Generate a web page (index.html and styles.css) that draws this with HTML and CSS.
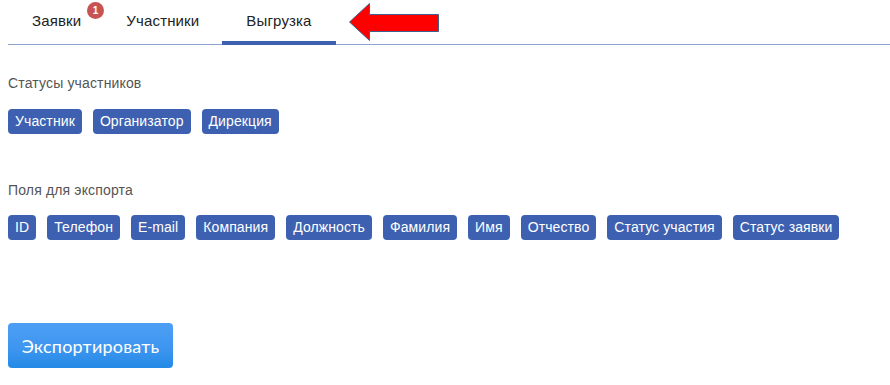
FILE: index.html
```html
<!DOCTYPE html>
<html lang="ru">
<head>
<meta charset="utf-8">
<title>Выгрузка</title>
<link rel="stylesheet" href="styles.css">
</head>
<body>
<div class="page">
  <nav class="tabs">
    <div class="tab">Заявки<span class="badge">1</span></div>
    <div class="tab">Участники</div>
    <div class="tab active">Выгрузка</div>
    <svg class="arrow" width="100" height="44" viewBox="0 0 100 44">
      <polygon points="5.5,22 25.5,3.5 25.5,14.5 94.5,14.5 94.5,31.5 25.5,31.5 25.5,40.5" fill="#ff0000" stroke="#41608f" stroke-width="1"/>
    </svg>
  </nav>

  <section class="group first">
    <div class="label">Статусы участников</div>
    <div class="chips">
      <span class="chip">Участник</span>
      <span class="chip">Организатор</span>
      <span class="chip">Дирекция</span>
    </div>
  </section>

  <section class="group second">
    <div class="label">Поля для экспорта</div>
    <div class="chips">
      <span class="chip">ID</span>
      <span class="chip">Телефон</span>
      <span class="chip">E-mail</span>
      <span class="chip">Компания</span>
      <span class="chip">Должность</span>
      <span class="chip">Фамилия</span>
      <span class="chip">Имя</span>
      <span class="chip">Отчество</span>
      <span class="chip">Статус участия</span>
      <span class="chip">Статус заявки</span>
    </div>
  </section>

  <button class="export">Экспортировать</button>
</div>
</body>
</html>
```

FILE: styles.css
```css
* { box-sizing: border-box; }
html, body { margin: 0; padding: 0; background: #fff; }
body {
  font-family: "Liberation Sans", Arial, sans-serif;
  color: #222;
}
.page {
  padding: 0 0 0 8px;
}
.tabs {
  position: relative;
  display: flex;
  border-bottom: 1px solid #8da2cf;
  height: 45px;
}
.tab {
  position: relative;
  height: 45px;
  line-height: 42px;
  padding: 0 23px 0 24px;
  font-size: 15px;
  letter-spacing: 0.15px;
  color: #222;
  border-bottom: 4px solid transparent;
  margin-bottom: -1px;
}
.tab:nth-child(2) { padding-left: 22px; }
.tab.active {
  border-bottom-color: #3d61b0;
  padding: 0 24px;
}
.badge {
  position: absolute;
  left: 79px;
  top: 2px;
  width: 17px;
  height: 17px;
  border-radius: 50%;
  background: #c75353;
  color: #fff;
  font-size: 10px;
  font-weight: bold;
  letter-spacing: 0;
  line-height: 17px;
  text-align: center;
}
.arrow {
  position: absolute;
  left: 336px;
  top: 0;
}
.group.first { padding-top: 28px; }
.group.second { padding-top: 46px; }
.label {
  font-size: 14px;
  line-height: 20px;
  letter-spacing: 0.15px;
  color: #555;
}
.chips {
  display: flex;
  gap: 11px;
  margin-top: 16px;
}
.group.second .chips { margin-top: 15px; }
.chip {
  display: inline-block;
  height: 25px;
  line-height: 25px;
  padding: 0 7px;
  background: #3d61b0;
  color: #fff;
  font-size: 14px;
  letter-spacing: 0.1px;
  border-radius: 4px;
  white-space: nowrap;
}
.export {
  display: block;
  margin-top: 83px;
  width: 165px;
  height: 45px;
  border: none;
  border-radius: 4px;
  background: linear-gradient(to bottom, #4c9ff4 0%, #3f96f0 55%, #238ae6 100%);
  color: #fff;
  font-family: "Lato", "Open Sans", sans-serif;
  font-size: 18px;
  letter-spacing: 0.2px;
  padding: 0;
  cursor: pointer;
}
```
